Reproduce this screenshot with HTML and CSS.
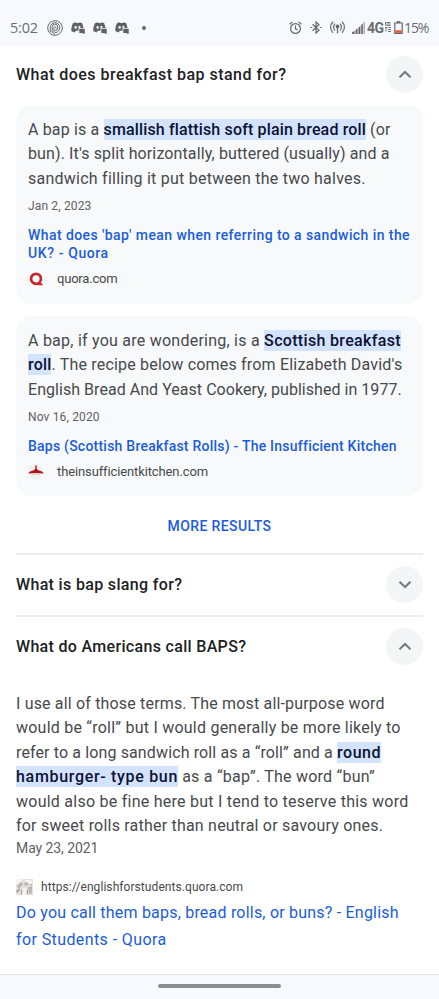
FILE: index.html
```html
<!DOCTYPE html>
<html lang="en">
<head>
    <meta charset="UTF-8">
    <meta name="viewport" content="width=device-width, initial-scale=1.0">
    <title>People also ask</title>
    <link rel="stylesheet" href="styles.css">
</head>
<body>
    <header class="status-bar">
        <span class="time">5:02</span>
        <svg class="ic-cast" width="16" height="16" viewBox="0 0 16 16" fill="none" stroke="#666" stroke-width="1">
            <circle cx="8" cy="8" r="7.3"/>
            <path d="M5.2 13V7.2a2.8 3.1 0 0 1 5.6 0v.6a2.7 2.7 0 0 1-2.8 2.7M3.3 12V7.3a4.7 4.6 0 0 1 9.4 0c0 3-1.7 5.3-4.5 5.3M7 14.5V7.6a1.1 1.3 0 0 1 2.1 0v.8"/>
        </svg>
        <svg class="ic-game" width="14" height="12" viewBox="0 0 14 12">
            <path fill="#5f6062" d="M2 1.3 4.4.3l.8.7h2.8l.8-.7 2.4 1L12.6 6H7.5v2.700H5l-1.600 1.800L.3 9C.2 6 .8 3.500 2 1.300Z"/>
            <ellipse cx="4.600" cy="5.400" rx="1.200" ry="1.400" fill="#f6f9fe"/>
            <ellipse cx="8.400" cy="4.900" rx="1.100" ry="1.100" fill="#f6f9fe"/>
            <path fill="#5f6062" d="M8.300 6.800h5.400v4.900h-1.500l-.6-.8H8.300z"/>
        </svg>
        <svg class="ic-game" width="14" height="12" viewBox="0 0 14 12">
            <path fill="#5f6062" d="M2 1.3 4.4.3l.8.7h2.8l.8-.7 2.4 1L12.6 6H7.5v2.700H5l-1.600 1.800L.3 9C.2 6 .8 3.500 2 1.300Z"/>
            <ellipse cx="4.600" cy="5.400" rx="1.200" ry="1.400" fill="#f6f9fe"/>
            <ellipse cx="8.400" cy="4.900" rx="1.100" ry="1.100" fill="#f6f9fe"/>
            <path fill="#5f6062" d="M8.300 6.800h5.400v4.900h-1.500l-.6-.8H8.300z"/>
        </svg>
        <svg class="ic-game" width="14" height="12" viewBox="0 0 14 12">
            <path fill="#5f6062" d="M2 1.3 4.4.3l.8.7h2.8l.8-.7 2.4 1L12.6 6H7.5v2.700H5l-1.600 1.800L.3 9C.2 6 .8 3.500 2 1.300Z"/>
            <ellipse cx="4.600" cy="5.400" rx="1.200" ry="1.400" fill="#f6f9fe"/>
            <ellipse cx="8.400" cy="4.900" rx="1.100" ry="1.100" fill="#f6f9fe"/>
            <path fill="#5f6062" d="M8.300 6.800h5.400v4.900h-1.500l-.6-.8H8.300z"/>
        </svg>
        <span class="dot"></span>

        <div class="status-right">
            <svg width="13" height="14" viewBox="0 0 13 14" fill="none" stroke="#666" stroke-width="1.2">
                <circle cx="6.5" cy="7.5" r="4.9"/>
                <path d="M.6 3.3 3.5.9M12.4 3.3 9.5.9M6.5 4.5v3.3l2 1.3"/>
            </svg>
            <svg class="ic-bt" width="12" height="13" viewBox="0 0 12 13" fill="none" stroke="#666" stroke-width="1.2">
                <path d="m2.5 3.3 6.5 6L6 12V1l3 2.7-6.5 6"/>
                <path d="M.5 6.5h1.7M9.8 6.5h1.7"/>
            </svg>
            <svg class="ic-hotspot" width="15" height="13" viewBox="0 0 15 13" fill="none" stroke="#666" stroke-width="1.2">
                <path d="M3 .7a7.5 7.5 0 0 0 0 11M12 .7a7.5 7.5 0 0 1 0 11M5 2.700a5 5 0 0 0 0 7M10 2.700a5 5 0 0 1 0 7M7.500 6v6.500"/>
                <circle cx="7.500" cy="5.500" r="1.300" fill="#666"/>
            </svg>
            <svg class="ic-signal" width="13" height="13" viewBox="0 0 13 13" fill="#666">
                <path d="M0 13v-1.500L2.500 9.700V13zM3.500 13V9l2-1.700V13zM6.400 13V6.700l2-1.700v8zM9.200 13V4l1.600-1.500V13z"/>
                <path fill="#b0b1b4" d="M11.400 13V1.700L13 .2V13z"/>
            </svg>
            <span class="network">4G</span>
            <svg class="ic-lte" width="6" height="10" viewBox="0 0 6 10" fill="none" stroke="#777" stroke-width="1">
                <path d="M.5 0v3.500M1.500.5h4M1.500 2h4M1.500 3.500h4M0 5.500h2.500M3.500 5.500H6M1 5.500v4M3 7.500h3M3 9.500h3"/>
            </svg>
            <svg class="ic-battery" width="9" height="13" viewBox="0 0 9 13">
                <path fill="none" stroke="#666" stroke-width="1.2" d="M.8 2h7.4v10.300H.8z"/>
                <path fill="#666" d="M2.700.2h3.600v1.800H2.700z"/>
                <path fill="#e8542f" d="M1.400 9.300h6.200v2.500H1.400z"/>
            </svg>
            <span class="percent">15%</span>
        </div>
    </header>

    <main>
        <div class="question">
            <h2 class="q1">What does breakfast bap stand for?</h2>
            <button class="toggle"><svg width="14" height="9" viewBox="0 0 14 9"><path d="m1.5 7.3 5.5-5.3 5.5 5.3"/></svg></button>
        </div>

        <div class="card card-first">
            <p class="answer">
                <span class="line l1">A bap is a <b>smallish flattish soft plain bread roll</b> (or</span>
                <span class="line l2">bun). It's split horizontally, buttered (usually) and a</span>
                <span class="line l3">sandwich filling it put between the two halves.</span>
            </p>
            <p class="date">Jan 2, 2023</p>
            <a class="link"><span class="line k1">What does 'bap' mean when referring to a sandwich in the</span>
                <span class="line k2">UK? - Quora</span></a>
            <div class="source">
                <svg width="16" height="16" viewBox="0 0 16 16">
                    <circle cx="8" cy="8" r="8" fill="#fff"/>
                    <circle cx="8" cy="7.8" r="5" fill="none" stroke="#c5282c" stroke-width="2.8"/>
                    <path d="M10 12.300h4.500v2H10z" fill="#c5282c"/>
                </svg>
                <span class="s1">quora.com</span>
            </div>
        </div>

        <div class="card card-second">
            <p class="answer">
                <span class="line l4">A bap, if you are wondering, is a <b>Scottish breakfast</b></span>
                <span class="line l5"><b>roll</b>. The recipe below comes from Elizabeth David's</span>
                <span class="line l6">English Bread And Yeast Cookery, published in 1977.</span>
            </p>
            <p class="date">Nov 16, 2020</p>
            <a class="link"><span class="line k3">Baps (Scottish Breakfast Rolls) - The Insufficient Kitchen</span></a>
            <div class="source">
                <svg width="16" height="16" viewBox="0 0 16 16">
                    <circle cx="8" cy="8" r="8" fill="#f0f1f2"/>
                    <path d="M.3 9.500c1-2 3.300-2.700 5.500-3.200l1.500-1.500V1.500h1.400v3.300l1.500 1.500c2.300.5 4.500 1.200 5.500 3.200-5-.7-10.400-.7-15.400 0Z" fill="#b5121b"/>
                    <path d="M4 10.300h8" stroke="#e8c8b5" stroke-width="1"/>
                </svg>
                <span class="s2">theinsufficientkitchen.com</span>
            </div>
        </div>

        <a class="more">MORE RESULTS</a>

        <div class="question ruled">
            <h2 class="q2">What is bap slang for?</h2>
            <button class="toggle"><svg width="14" height="9" viewBox="0 0 14 9"><path d="m1.5 1.7 5.5 5.3 5.5-5.3"/></svg></button>
        </div>

        <div class="question ruled">
            <h2 class="q3">What do Americans call BAPS?</h2>
            <button class="toggle"><svg width="14" height="9" viewBox="0 0 14 9"><path d="m1.5 7.3 5.5-5.3 5.5 5.3"/></svg></button>
        </div>

        <div class="open-answer">
            <p class="answer">
                <span class="line l7">I use all of those terms. The most all-purpose word</span>
                <span class="line l8">would be “roll” but I would generally be more likely to</span>
                <span class="line l9">refer to a long sandwich roll as a “roll” and a <b>round</b></span>
                <span class="line l10"><b>hamburger- type bun</b> as a “bap”. The word “bun”</span>
                <span class="line l11">would also be fine here but I tend to teserve this word</span>
                <span class="line l12">for sweet rolls rather than neutral or savoury ones.</span>
            </p>
            <p class="date-large">May 23, 2021</p>
            <div class="site">
                <svg width="17" height="16" viewBox="0 0 17 16">
                    <path fill="#e3e1dd" d="M0 0h17v16H0z"/>
                    <path fill="#f5f5f3" d="M0 0h7L3 5H0zM9 1h6l2 4h-5zM7 9h3v7H7z"/>
                    <path fill="#bdb7ab" d="M1 7l4-4 2 2-4 5zM8 4l3-1 2 3-4 1zM12 8l4-1v7l-3 1z"/>
                    <path fill="#a8a399" d="M0 12l4-3v2l-3 3zM5 11h1v4H5zM11 11h1v4h-1zM14 5h2v1h-2z"/>
                </svg>
                <span class="s3">https://englishforstudents.quora.com</span>
            </div>
            <a class="link-large"><span class="line k4">Do you call them baps, bread rolls, or buns? - English</span>
                <span class="line k5">for Students - Quora</span></a>
        </div>
    </main>

    <footer class="nav-bar"><span class="handle"></span></footer>
</body>
</html>
```
FILE: styles.css
```css
* {
    box-sizing: border-box;
}

body {
    margin: 0;
    height: 999px;
    display: flex;
    flex-direction: column;
    overflow: hidden;
    background: #fff;
    font-family: Roboto, "Liberation Sans", sans-serif;
    color: #47494c;
}

p, h2 {
    margin: 0;
}

.status-bar {
    height: 47px;
    flex: none;
    padding: 8px 10px 0;
    display: flex;
    align-items: center;
    background: #f6f9fe;
    color: #6b6c6f;
    font-family: "Open Sans", sans-serif;
}

.time {
    width: 37px;
    font-size: 14.5px;
    letter-spacing: -0.2px;
}

.ic-cast {
    margin-right: 8px;
}

.ic-game {
    margin-right: 8.2px;
}

.dot {
    width: 4px;
    height: 4px;
    margin-left: 4px;
    border-radius: 50%;
    background: #666;
}

.status-right {
    margin-left: auto;
    display: flex;
    align-items: center;
}

.ic-bt {
    margin-left: 7.5px;
}

.ic-hotspot {
    margin-left: 8px;
}

.ic-signal {
    margin-left: 7.5px;
}

.network {
    width: 18px;
    margin-left: 2px;
    font: bold 14px Roboto, sans-serif;
    letter-spacing: -0.5px;
}

.ic-lte {
    margin: 0 3px 2px 0;
}

.percent {
    width: 25px;
    margin-left: 1px;
    font-size: 14px;
    letter-spacing: -1.1px;
}

main {
    flex: 1;
    padding: 0 16px;
}

.question {
    height: 58px;
    padding-bottom: 3px;
    display: flex;
    align-items: center;
    justify-content: space-between;
}

.question h2 {
    padding-bottom: 1px;
    font-size: 16px;
    font-weight: 500;
    color: #202124;
    white-space: nowrap;
}

.toggle {
    width: 37px;
    height: 37px;
    padding: 0;
    border: none;
    border-radius: 50%;
    background: #f3f5f7;
    display: flex;
    align-items: center;
    justify-content: center;
}

.toggle path {
    fill: none;
    stroke: #76787b;
    stroke-width: 2;
}

.card {
    padding: 13px 12px 0;
    border-radius: 16px;
    background: #f8f9fb;
}

.card-first {
    height: 199px;
}

.card-second {
    height: 180px;
    margin-top: 12px;
}

.line {
    display: block;
    white-space: nowrap;
}

.answer {
    font-size: 16px;
    line-height: 24.4px;
}

.answer b {
    padding: 1px 0;
    font-weight: 500;
    color: #0b1233;
    background: #d3e3fd;
}

.date {
    margin-top: 6px;
    font-size: 12px;
    line-height: 18px;
    letter-spacing: 0.15px;
    color: #5f6164;
}

.link {
    display: block;
    margin-top: 11px;
    font-size: 14px;
    font-weight: 500;
    line-height: 18px;
    color: #1b5cdb;
}

.source {
    margin-top: 9px;
    display: flex;
    align-items: center;
    gap: 13px;
    font-size: 13px;
    line-height: 16px;
}

.more {
    display: block;
    height: 57px;
    padding-top: 20px;
    text-align: center;
    font-size: 14px;
    font-weight: 500;
    line-height: 20px;
    letter-spacing: 0.38px;
    color: #1b5cdb;
}

.ruled {
    height: 62px;
    padding: 0 0 1px;
    border-top: 2px solid #eceef1;
}

.open-answer {
    padding-top: 15px;
}

.date-large {
    font-size: 14px;
    line-height: 20px;
    letter-spacing: -0.08px;
    color: #5f6164;
}

.site {
    margin-top: 21px;
    display: flex;
    align-items: center;
    gap: 8px;
    font-size: 12px;
    line-height: 16px;
}

.link-large {
    display: block;
    margin-top: 5px;
    font-size: 16px;
    line-height: 26.5px;
    color: #1b5cdb;
}

.nav-bar {
    height: 25px;
    flex: none;
    display: flex;
    justify-content: center;
    padding-top: 9px;
    border-top: 1px solid #e2e5e9;
    background: #f6f9fe;
}

.handle {
    width: 123px;
    height: 4px;
    border-radius: 2px;
    background: #8b8d91;
}

/* tracking per line */
.q1 { letter-spacing: 0.47px; }
.q2 { letter-spacing: 0.34px; }
.q3 { letter-spacing: 0.32px; }

.l1 { letter-spacing: 0.15px; }
.l2 { letter-spacing: 0.12px; }
.l3 { letter-spacing: 0.245px; }
.l4 { letter-spacing: 0.24px; }
.l4 b { letter-spacing: 0.33px; }
.l5 { letter-spacing: 0.19px; }
.l6 { letter-spacing: 0.04px; }
.l7 { letter-spacing: 0.17px; }
.l8 { letter-spacing: 0.23px; }
.l9 { letter-spacing: 0.125px; }
.l9 b { letter-spacing: 0.55px; }
.l10 { letter-spacing: 0.23px; }
.l10 b { letter-spacing: 0.68px; }
.l11 { letter-spacing: 0.25px; }
.l12 { letter-spacing: 0.21px; }

.k1 { letter-spacing: 0.42px; }
.k2 { letter-spacing: 0.6px; }
.k3 { letter-spacing: 0.23px; }
.k4 { letter-spacing: 0.21px; }
.k5 { letter-spacing: 0.4px; }

.s1 { letter-spacing: -0.2px; }
.s2 { letter-spacing: -0.12px; }
.s3 { letter-spacing: 0.07px; }
```
